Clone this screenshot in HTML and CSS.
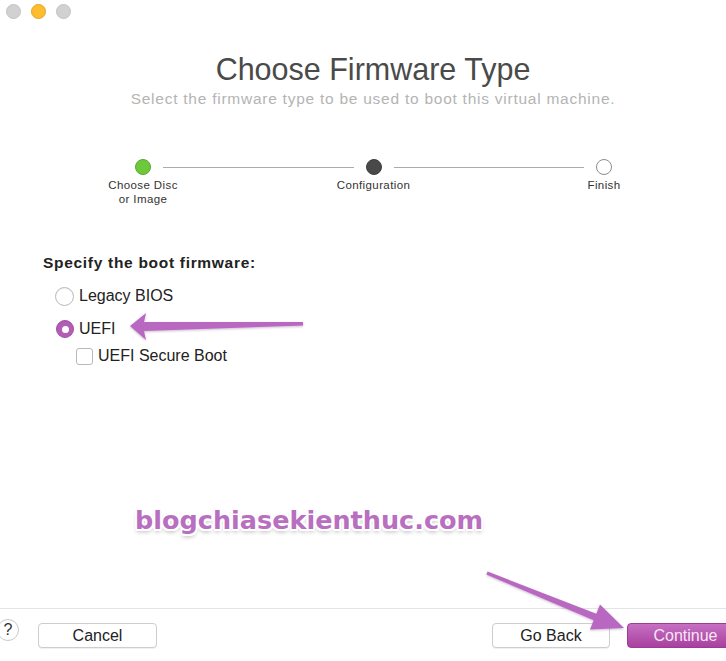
FILE: index.html
```html
<!DOCTYPE html>
<html>
<head>
<meta charset="utf-8">
<link rel="stylesheet" href="styles.css">
</head>
<body>
<div class="window">
  <div class="titlebar">
    <span class="light grey"></span>
    <span class="light yellow"></span>
    <span class="light grey"></span>
  </div>

  <div class="header">
    <h1 class="title">Choose Firmware Type</h1>
    <p class="subtitle">Select the firmware type to be used to boot this virtual machine.</p>
  </div>

  <div class="steps">
    <div class="step">
      <span class="dot done"></span>
      <span class="label">Choose Disc<br>or Image</span>
    </div>
    <span class="track"></span>
    <div class="step">
      <span class="dot current"></span>
      <span class="label">Configuration</span>
    </div>
    <span class="track"></span>
    <div class="step">
      <span class="dot todo"></span>
      <span class="label">Finish</span>
    </div>
  </div>

  <div class="form">
    <div class="form-title">Specify the boot firmware:</div>
    <div class="option legacy">
      <span class="radio"></span>
      <span class="opt-text">Legacy BIOS</span>
    </div>
    <div class="option uefi">
      <span class="radio checked"></span>
      <span class="opt-text">UEFI</span>
    </div>
    <div class="option secure">
      <span class="checkbox"></span>
      <span class="opt-text">UEFI Secure Boot</span>
    </div>
  </div>

  <div class="spacer"></div>

  <div class="footer">
    <span class="help">?</span>
    <span class="btn cancel">Cancel</span>
    <span class="btn goback">Go Back</span>
    <span class="btn primary">Continue</span>
  </div>

  <div class="watermark">blogchiasekienthuc.com</div>

  <svg class="arrows" width="726" height="661" viewBox="0 0 726 661">
    <defs>
      <filter id="sh" x="-10%" y="-10%" width="120%" height="130%">
        <feDropShadow dx="0" dy="1" stdDeviation="1" flood-color="#6a3a6e" flood-opacity="0.35"/>
      </filter>
    </defs>
    <polygon filter="url(#sh)" fill="#b968c2" points="130,326 146,313 144,322 303,322 303,325.5 144,331 146,340"/>
    <polygon filter="url(#sh)" fill="#b968c2" points="624,628 600,604.5 596.3,613.8 487.6,571.6 486.4,574.6 593.7,620.2 590,629.5"/>
  </svg>
</div>
</body>
</html>
```

FILE: styles.css
```css
html, body {
  margin: 0;
  padding: 0;
  background: #ffffff;
}

.window {
  position: relative;
  width: 726px;
  height: 661px;
  overflow: hidden;
  background: #ffffff;
  display: flex;
  flex-direction: column;
  font-family: "Liberation Sans", Arial, sans-serif;
  color: #2b2b2b;
}

.titlebar {
  height: 19px;
  padding-top: 4px;
  padding-left: 6px;
  display: flex;
  gap: 10px;
  align-items: flex-start;
}

.light {
  width: 15px;
  height: 15px;
  border-radius: 50%;
  box-sizing: border-box;
}

.light.grey {
  background: #d1d1d1;
  border: 1px solid #c3c3c3;
}

.light.yellow {
  background: #fdbd2f;
  border: 1px solid #e3a523;
}

.header {
  margin-top: 28px;
  padding-left: 20px;
  text-align: center;
}

.title {
  margin: 0;
  font-size: 30.5px;
  line-height: 36px;
  font-weight: normal;
  color: #4a4a4a;
}

.subtitle {
  margin: 3px 0 0;
  font-size: 15.5px;
  letter-spacing: 0.75px;
  line-height: 18px;
  color: #b4b4b4;
}

.steps {
  margin-top: 51px;
  margin-left: 143px;
  width: 461px;
  display: flex;
  align-items: flex-start;
}

.step {
  width: 0;
  display: flex;
  flex-direction: column;
  align-items: center;
}

.dot {
  flex: none;
  width: 16px;
  height: 16px;
  border-radius: 50%;
  box-sizing: border-box;
}

.dot.done {
  background: #6ec83b;
  border: 1px solid #58a72c;
}

.dot.current {
  background: #494949;
  border: 1px solid #3e3e3e;
}

.dot.todo {
  background: #ffffff;
  border: 1px solid #8c8c8c;
}

.label {
  margin-top: 3px;
  white-space: nowrap;
  text-align: center;
  font-size: 11.5px;
  letter-spacing: 0.4px;
  line-height: 14px;
  color: #333333;
}

.track {
  flex: 1;
  height: 1px;
  margin: 7.5px 20px 0;
  background: #ababab;
}

.form {
  margin-top: 48px;
  padding-left: 43px;
  display: flex;
  flex-direction: column;
  align-items: flex-start;
}

.form-title {
  font-size: 15.5px;
  letter-spacing: 0.7px;
  line-height: 18px;
  font-weight: bold;
  color: #222222;
}

.option {
  display: flex;
  align-items: center;
  gap: 5px;
  height: 20px;
}

.opt-text {
  font-size: 16px;
  line-height: 20px;
  color: #222222;
}

.option.legacy {
  margin-top: 14px;
  margin-left: 12px;
}

.option.uefi {
  margin-top: 13px;
  margin-left: 13px;
}

.option.secure {
  margin-top: 7px;
  margin-left: 33px;
}

.radio {
  width: 19px;
  height: 19px;
  border-radius: 50%;
  box-sizing: border-box;
  background: #ffffff;
  border: 1px solid #b9b9b9;
  box-shadow: inset 0 1px 1px rgba(0, 0, 0, 0.06);
}

.radio.checked {
  width: 18px;
  height: 18px;
  background: #b45db5;
  border: 1px solid #a54fa6;
  display: flex;
  align-items: center;
  justify-content: center;
}

.radio.checked::after {
  content: "";
  width: 7px;
  height: 7px;
  border-radius: 50%;
  background: #ffffff;
}

.checkbox {
  width: 17px;
  height: 17px;
  box-sizing: border-box;
  border: 1px solid #b9b9b9;
  border-radius: 3px;
  background: #ffffff;
}

.spacer {
  flex: 1;
}

.footer {
  height: 53px;
  box-sizing: border-box;
  border-top: 1px solid #e4e4e4;
  padding-top: 10px;
  display: flex;
  align-items: flex-start;
}

.help {
  flex: none;
  margin-left: -3px;
  width: 22px;
  height: 22px;
  box-sizing: border-box;
  border: 1px solid #c9c9c9;
  border-radius: 50%;
  display: flex;
  align-items: center;
  justify-content: center;
  font-size: 16px;
  color: #333333;
  background: #ffffff;
}

.btn {
  flex: none;
  height: 25px;
  box-sizing: border-box;
  margin-top: 4px;
  border-radius: 4px;
  display: flex;
  align-items: center;
  justify-content: center;
  font-size: 16px;
  color: #222222;
}

.btn.cancel,
.btn.goback {
  background: #ffffff;
  border: 1px solid #cdcdcd;
  box-shadow: 0 1px 0 rgba(0, 0, 0, 0.06);
}

.btn.cancel {
  width: 119px;
  margin-left: 19px;
}

.btn.goback {
  width: 118px;
  margin-left: auto;
}

.btn.primary {
  width: 117px;
  margin-left: 17px;
  margin-right: -18px;
  color: #f6e6f4;
  background: linear-gradient(#c670c3, #a8409f);
  border: 1px solid #9c3a96;
}

.watermark {
  position: absolute;
  left: 135px;
  top: 505px;
  font-family: "DejaVu Sans", sans-serif;
  font-weight: bold;
  font-size: 25.5px;
  line-height: 30px;
  color: #b96fc0;
  text-shadow:
    -2px 0 0 #fff, 2px 0 0 #fff, 0 -2px 0 #fff, 0 2px 0 #fff,
    -1.5px -1.5px 0 #fff, 1.5px -1.5px 0 #fff, -1.5px 1.5px 0 #fff, 1.5px 1.5px 0 #fff,
    0 3px 4px rgba(0, 0, 0, 0.3);
}

.arrows {
  position: absolute;
  left: 0;
  top: 0;
  pointer-events: none;
}
```
